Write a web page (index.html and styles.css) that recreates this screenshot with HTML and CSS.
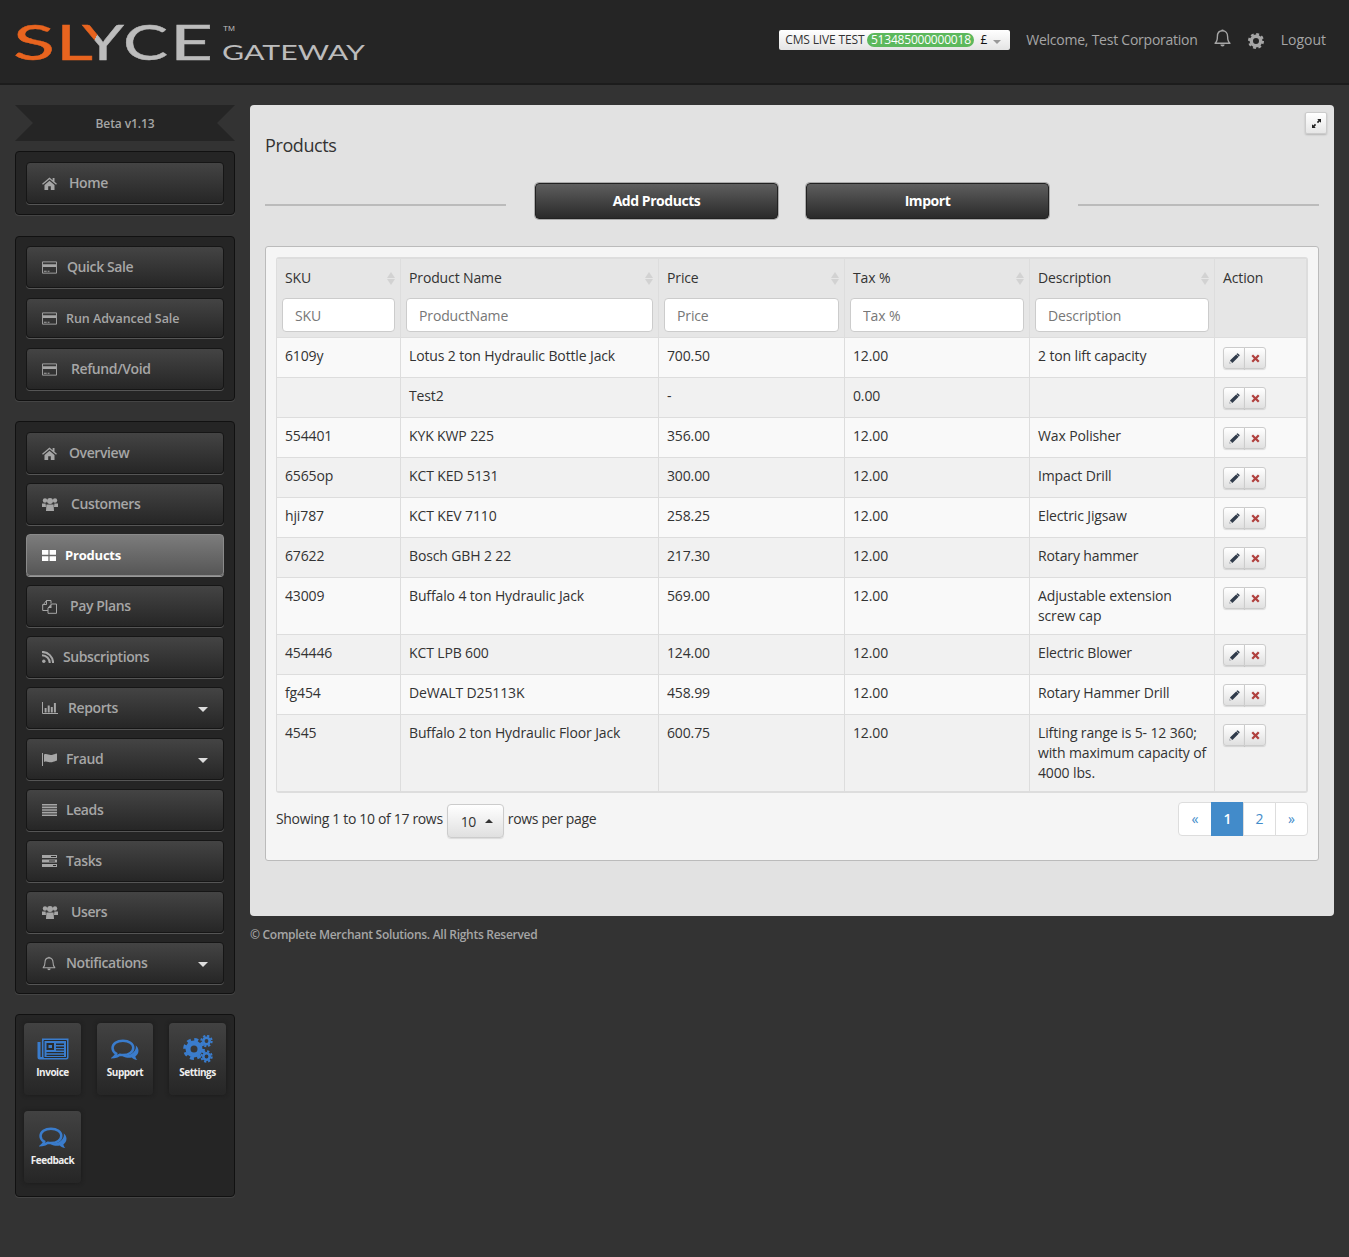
FILE: index.html
```html
<!DOCTYPE html>
<html lang="en">
<head>
    <meta charset="UTF-8">
    <meta name="viewport" content="width=device-width, initial-scale=1.0">
    <title>Slyce Gateway - Products</title>
    <link rel="stylesheet" href="styles.css">
</head>
<body>
    <svg class="sprite" xmlns="http://www.w3.org/2000/svg">
        <symbol id="i-home" viewBox="0 0 16 14"><path d="M8 0.5 0 7.4l0.9 1L8 2.4l7.1 6 0.9-1-2.6-2.2V1h-2v2.5zM2.6 8.6V14h4V10h2.8v4h4V8.6L8 4z" fill="currentColor"/></symbol>
        <symbol id="i-card" viewBox="0 0 16 13"><path d="M0.5 0.5h15v12h-15z" fill="none" stroke="currentColor"/><path d="M1 3h14v3H1zM2 10h3v1H2zM6 10h2v1H6z" fill="currentColor"/></symbol>
        <symbol id="i-users" viewBox="0 0 16 14"><circle cx="3" cy="3.5" r="2.2" fill="currentColor"/><circle cx="13" cy="3.5" r="2.2" fill="currentColor"/><circle cx="8" cy="4" r="3" fill="currentColor"/><path d="M0 6.5h3.6L4 10H0zM12.4 6.5H16V10h-4zM4.4 7.5h7.2L12 14H4z" fill="currentColor"/></symbol>
        <symbol id="i-grid" viewBox="0 0 14 11"><path d="M0 0h6.4v4.8H0zM7.6 0H14v4.8H7.6zM0 6.2h6.4V11H0zM7.6 6.2H14V11H7.6z" fill="currentColor"/></symbol>
        <symbol id="i-files" viewBox="0 0 15 15"><path d="M0.7 6.5 4.5 1.5H9v3M4.5 1.5v4H0.7v6H6M9.5 5h5v9.3H6V9z" fill="none" stroke="currentColor"/><path d="M6 9l3.5-4v4z" fill="currentColor"/></symbol>
        <symbol id="i-rss" viewBox="0 0 12 12"><circle cx="1.8" cy="10.2" r="1.7" fill="currentColor"/><path d="M0 4.2a7.8 7.8 0 0 1 7.8 7.8M0 0.9A11.1 11.1 0 0 1 11.1 12" fill="none" stroke="currentColor" stroke-width="2"/></symbol>
        <symbol id="i-chart" viewBox="0 0 16 12"><path d="M0.5 0v11.5H16" fill="none" stroke="currentColor"/><path d="M2.6 6h2v4.4h-2zM5.700 3.600h2v6.800h-2zM8.800 5h2v5.400h-2zM11.900 1h2v9.400h-2z" fill="currentColor"/></symbol>
        <symbol id="i-flag" viewBox="0 0 15 13"><path d="M0.5 0v13" fill="none" stroke="currentColor"/><path d="M2 1.500c3-1.400 5 1.200 8 0.400 1.600-0.400 3-1 5-1.400v7c-2 0.400-3.400 1.400-5 1.700-3 0.600-5-1.600-8-0.300z" fill="currentColor"/></symbol>
        <symbol id="i-list" viewBox="0 0 15 12"><path d="M0 0h15v1.600H0zM0 2.600h15v1.600H0zM0 5.200h15v1.600H0zM0 7.800h15v1.600H0zM0 10.400h15V12H0z" fill="currentColor"/></symbol>
        <symbol id="i-tasks" viewBox="0 0 15 12"><path d="M0 0h15v3H0zM0 4.500h15v3H0zM0 9h15v3H0z" fill="currentColor"/><path d="M9 1h5v1H9zM7 5.500h6v1H7zM11 10h3v1h-3z" fill="#2c2c2c"/></symbol>
        <symbol id="i-bell" viewBox="0 0 16 18"><path d="M1 14c2-1.600 2.200-3.600 2.200-6.400C3.200 4.500 5 2.200 8 2.200s4.800 2.300 4.800 5.400c0 2.800 0.200 4.800 2.200 6.400z" fill="none" stroke="currentColor" stroke-width="1.300" stroke-linejoin="round"/><path d="M6.700 2.200a1.300 1.300 0 0 1 2.600 0zM6 15h4a2 2 0 0 1-4 0z" fill="currentColor"/></symbol>
        <symbol id="i-gear" viewBox="0 0 16 16"><circle cx="8" cy="8" r="4.700" fill="none" stroke="currentColor" stroke-width="3.400"/><circle cx="8" cy="8" r="6.900" fill="none" stroke="currentColor" stroke-width="2.200" stroke-dasharray="2.900 2.520"/></symbol>
        <symbol id="i-comments" viewBox="0.500 0.500 27 21"><path d="M12 2C6.200 2 2 5 2 9c0 2.300 1.400 4.300 3.500 5.500-0.300 1.300-1 2.300-2 3.200 2.200-0.200 4-1 5.500-2.100 1 0.200 2 0.300 3 0.300 5.800 0 10-3 10-7S17.800 2 12 2z" fill="none" stroke="currentColor" stroke-width="2.400"/><path d="M24.300 6.500C26 8 27 9.700 27 11.800c0 2.200-1.200 4.100-3 5.400 0.300 1.300 1 2.600 1.800 3.500-2.100-0.200-4-1.200-5.300-2.400-3.500 0.700-7.500-0.200-9.700-2 6 0.500 12-1.800 13.500-6.600 0.300-1.100 0.300-2.200 0-3.200z" fill="currentColor"/></symbol>
        <symbol id="i-news" viewBox="0 0 32 22"><path d="M5 0.500h26.500v19a2 2 0 0 1-2 2H2.500A2 2 0 0 1 0.500 19.500V4H3.500v15h1.500z" fill="currentColor"/><path d="M7 2.500h22.500v17H7z" fill="none" stroke="#2b2b2b"/><path d="M9.500 5h7.500v7H9.500zM19 5.500h8v1.500h-8zM19 8.500h8V10h-8zM19 11.200h8v1.300h-8zM9.500 14h17.500v1.300H9.500zM9.500 16.800h17.500v1.300H9.500z" fill="#2b2b2b"/><path d="M11.500 7h3.500v3h-3.500z" fill="currentColor"/></symbol>
        <symbol id="i-cogs" viewBox="0 0 30 28"><g fill="none" stroke="currentColor"><circle cx="11" cy="14" r="6" stroke-width="5"/><circle cx="11" cy="14" r="9.400" stroke-width="3" stroke-dasharray="4 3.380"/><circle cx="23.500" cy="6" r="3.200" stroke-width="2.600"/><circle cx="23.500" cy="6" r="5.200" stroke-width="2" stroke-dasharray="2.200 1.880"/><circle cx="23.500" cy="21.500" r="3.200" stroke-width="2.600"/><circle cx="23.500" cy="21.500" r="5.200" stroke-width="2" stroke-dasharray="2.200 1.880"/></g></symbol>
        <symbol id="i-pencil" viewBox="0 0 12 12"><path d="M0.500 11.500 1.300 8 7.800 1.500l2.700 2.700L4 10.700zM8.600 0.700a1 1 0 0 1 1.400 0l1.300 1.300a1 1 0 0 1 0 1.400l-0.500 0.500-2.700-2.700z" fill="#2f3a4a"/><path d="M1.500 8.500 3.500 10.500 0.500 11.500z" fill="#ddd"/></symbol>
        <symbol id="i-times" viewBox="0 0 10 10"><path d="M0.500 2.300 2.300 0.500 5 3.200 7.700 0.500 9.500 2.300 6.800 5l2.700 2.700-1.800 1.800L5 6.800 2.300 9.500 0.500 7.700 3.200 5z" fill="#b0403e"/></symbol>
        <symbol id="i-expand" viewBox="0 0 10 10"><path d="M5.800 0H10v4.200L8.500 2.800 6.700 4.600 5.400 3.300 7.200 1.500zM4.200 10H0V5.800l1.500 1.400 1.800-1.800 1.300 1.300-1.800 1.800z" fill="#222"/></symbol>
    </svg>

    <header class="topbar">
        <svg class="logo" width="370" height="84" viewBox="0 0 370 84" xmlns="http://www.w3.org/2000/svg">
            <defs>
                <linearGradient id="yfill" x1="0" y1="0" x2="1" y2="0.7">
                    <stop offset="0.42" stop-color="#e8641f"/>
                    <stop offset="0.42" stop-color="#bcbcbc"/>
                </linearGradient>
            </defs>
            <g class="logo-big">
                <text x="13" y="60" textLength="42" lengthAdjust="spacingAndGlyphs" fill="#e8641f" stroke="#e8641f">S</text>
                <text x="56" y="60" textLength="37" lengthAdjust="spacingAndGlyphs" fill="#e8641f" stroke="#e8641f">L</text>
                <text x="82" y="60" textLength="42" lengthAdjust="spacingAndGlyphs" fill="url(#yfill)" stroke="url(#yfill)">Y</text>
                <text x="123" y="60" textLength="45" lengthAdjust="spacingAndGlyphs" fill="#bcbcbc" stroke="#bcbcbc">C</text>
                <text x="170" y="60" textLength="43" lengthAdjust="spacingAndGlyphs" fill="#bcbcbc" stroke="#bcbcbc">E</text>
            </g>
            <text class="logo-tm" x="223" y="31" textLength="12" lengthAdjust="spacingAndGlyphs">TM</text>
            <text class="logo-small" x="222" y="60" textLength="143" lengthAdjust="spacingAndGlyphs">GATEWAY</text>
        </svg>
        <div class="topbar-right">
            <div class="merchant-select">
                <span class="merchant-name">CMS LIVE TEST</span>
                <span class="merchant-id">513485000000018</span>
                <span class="merchant-cur">£</span>
                <span class="caret caret-grey"></span>
            </div>
            <a class="welcome">Welcome, Test Corporation</a>
            <svg class="top-bell"><use href="#i-bell"/></svg>
            <svg class="top-gear"><use href="#i-gear"/></svg>
            <a class="logout">Logout</a>
        </div>
    </header>

    <div class="layout">
        <aside class="sidebar">
            <div class="ribbon">Beta v1.13</div>

            <nav class="panel panel-home">
                <a class="nav-btn off-27"><span class="nav-icon"><svg width="15" height="13"><use href="#i-home"/></svg></span>Home</a>
            </nav>

            <nav class="panel panel-sales">
                <a class="nav-btn off-25"><span class="nav-icon"><svg width="15" height="13"><use href="#i-card"/></svg></span>Quick Sale</a>
                <a class="nav-btn nav-short off-24"><span class="nav-icon"><svg width="15" height="13"><use href="#i-card"/></svg></span>Run Advanced Sale</a>
                <a class="nav-btn off-29"><span class="nav-icon"><svg width="15" height="13"><use href="#i-card"/></svg></span>Refund/Void</a>
            </nav>

            <nav class="panel panel-main">
                <a class="nav-btn off-27"><span class="nav-icon"><svg width="15" height="13"><use href="#i-home"/></svg></span>Overview</a>
                <a class="nav-btn off-29"><span class="nav-icon"><svg width="16" height="14"><use href="#i-users"/></svg></span>Customers</a>
                <a class="nav-btn active off-23"><span class="nav-icon"><svg width="14" height="11"><use href="#i-grid"/></svg></span>Products</a>
                <a class="nav-btn off-28"><span class="nav-icon"><svg width="15" height="15"><use href="#i-files"/></svg></span>Pay Plans</a>
                <a class="nav-btn off-21"><span class="nav-icon"><svg width="12" height="12"><use href="#i-rss"/></svg></span>Subscriptions</a>
                <a class="nav-btn off-26"><span class="nav-icon"><svg width="16" height="12"><use href="#i-chart"/></svg></span>Reports<span class="caret"></span></a>
                <a class="nav-btn off-24"><span class="nav-icon"><svg width="15" height="13"><use href="#i-flag"/></svg></span>Fraud<span class="caret"></span></a>
                <a class="nav-btn off-24"><span class="nav-icon"><svg width="15" height="12"><use href="#i-list"/></svg></span>Leads</a>
                <a class="nav-btn off-24"><span class="nav-icon"><svg width="15" height="12"><use href="#i-tasks"/></svg></span>Tasks</a>
                <a class="nav-btn off-29"><span class="nav-icon"><svg width="16" height="14"><use href="#i-users"/></svg></span>Users</a>
                <a class="nav-btn off-24"><span class="nav-icon"><svg width="14" height="15"><use href="#i-bell"/></svg></span>Notifications<span class="caret"></span></a>
            </nav>

            <div class="panel panel-tiles">
                <a class="tile tile-news"><svg width="32" height="22"><use href="#i-news"/></svg>Invoice</a>
                <a class="tile"><svg width="28" height="22"><use href="#i-comments"/></svg>Support</a>
                <a class="tile tile-cogs"><svg width="30" height="28"><use href="#i-cogs"/></svg>Settings</a>
                <a class="tile"><svg width="28" height="22"><use href="#i-comments"/></svg>Feedback</a>
            </div>
        </aside>

        <div class="content">
            <main class="main-box">
                <button class="expand-btn"><svg width="9" height="9"><use href="#i-expand"/></svg></button>
                <h1>Products</h1>

                <div class="action-row">
                    <span class="rule"></span>
                    <button class="big-btn">Add Products</button>
                    <button class="big-btn">Import</button>
                    <span class="rule"></span>
                </div>

                <section class="well">
                    <div class="table-wrap">
                        <table class="products">
                            <colgroup>
                                <col class="c-sku"><col class="c-name"><col class="c-price"><col class="c-tax"><col class="c-desc"><col class="c-action">
                            </colgroup>
                            <thead>
                                <tr>
                                    <th><div class="th-label sortable">SKU</div><input placeholder="SKU"></th>
                                    <th><div class="th-label sortable">Product Name</div><input placeholder="ProductName"></th>
                                    <th><div class="th-label sortable">Price</div><input placeholder="Price"></th>
                                    <th><div class="th-label sortable">Tax %</div><input placeholder="Tax %"></th>
                                    <th><div class="th-label sortable">Description</div><input placeholder="Description"></th>
                                    <th><div class="th-label">Action</div></th>
                                </tr>
                            </thead>
                            <tbody>
                                <tr>
                                    <td>6109y</td><td>Lotus 2 ton Hydraulic Bottle Jack</td><td>700.50</td><td>12.00</td><td>2 ton lift capacity</td>
                                    <td><div class="row-btns"><button><svg width="11" height="11"><use href="#i-pencil"/></svg></button><button><svg width="9" height="9"><use href="#i-times"/></svg></button></div></td>
                                </tr>
                                <tr>
                                    <td></td><td>Test2</td><td>-</td><td>0.00</td><td></td>
                                    <td><div class="row-btns"><button><svg width="11" height="11"><use href="#i-pencil"/></svg></button><button><svg width="9" height="9"><use href="#i-times"/></svg></button></div></td>
                                </tr>
                                <tr>
                                    <td>554401</td><td>KYK KWP 225</td><td>356.00</td><td>12.00</td><td>Wax Polisher</td>
                                    <td><div class="row-btns"><button><svg width="11" height="11"><use href="#i-pencil"/></svg></button><button><svg width="9" height="9"><use href="#i-times"/></svg></button></div></td>
                                </tr>
                                <tr>
                                    <td>6565op</td><td>KCT KED 5131</td><td>300.00</td><td>12.00</td><td>Impact Drill</td>
                                    <td><div class="row-btns"><button><svg width="11" height="11"><use href="#i-pencil"/></svg></button><button><svg width="9" height="9"><use href="#i-times"/></svg></button></div></td>
                                </tr>
                                <tr>
                                    <td>hji787</td><td>KCT KEV 7110</td><td>258.25</td><td>12.00</td><td>Electric Jigsaw</td>
                                    <td><div class="row-btns"><button><svg width="11" height="11"><use href="#i-pencil"/></svg></button><button><svg width="9" height="9"><use href="#i-times"/></svg></button></div></td>
                                </tr>
                                <tr>
                                    <td>67622</td><td>Bosch GBH 2 22</td><td>217.30</td><td>12.00</td><td>Rotary hammer</td>
                                    <td><div class="row-btns"><button><svg width="11" height="11"><use href="#i-pencil"/></svg></button><button><svg width="9" height="9"><use href="#i-times"/></svg></button></div></td>
                                </tr>
                                <tr>
                                    <td>43009</td><td>Buffalo 4 ton Hydraulic Jack</td><td>569.00</td><td>12.00</td><td>Adjustable extension screw cap</td>
                                    <td><div class="row-btns"><button><svg width="11" height="11"><use href="#i-pencil"/></svg></button><button><svg width="9" height="9"><use href="#i-times"/></svg></button></div></td>
                                </tr>
                                <tr>
                                    <td>454446</td><td>KCT LPB 600</td><td>124.00</td><td>12.00</td><td>Electric Blower</td>
                                    <td><div class="row-btns"><button><svg width="11" height="11"><use href="#i-pencil"/></svg></button><button><svg width="9" height="9"><use href="#i-times"/></svg></button></div></td>
                                </tr>
                                <tr>
                                    <td>fg454</td><td>DeWALT D25113K</td><td>458.99</td><td>12.00</td><td>Rotary Hammer Drill</td>
                                    <td><div class="row-btns"><button><svg width="11" height="11"><use href="#i-pencil"/></svg></button><button><svg width="9" height="9"><use href="#i-times"/></svg></button></div></td>
                                </tr>
                                <tr>
                                    <td>4545</td><td>Buffalo 2 ton Hydraulic Floor Jack</td><td>600.75</td><td>12.00</td><td>Lifting range is 5- 12 360; with maximum capacity of 4000 lbs.</td>
                                    <td><div class="row-btns"><button><svg width="11" height="11"><use href="#i-pencil"/></svg></button><button><svg width="9" height="9"><use href="#i-times"/></svg></button></div></td>
                                </tr>
                            </tbody>
                        </table>
                    </div>

                    <div class="table-foot">
                        <div class="rows-info">
                            <span>Showing 1 to 10 of 17 rows</span>
                            <button class="page-size">10<span class="caret caret-up"></span></button>
                            <span>rows per page</span>
                        </div>
                        <div class="pager">
                            <a>«</a><a class="current">1</a><a>2</a><a>»</a>
                        </div>
                    </div>
                </section>
            </main>
            <footer class="copyright">© Complete Merchant Solutions. All Rights Reserved</footer>
        </div>
    </div>
</body>
</html>
```

FILE: styles.css
```css
* {
    box-sizing: border-box;
}
body {
    margin: 0;
    min-height: 1257px;
    background-color: #333;
    font-family: "Open Sans", sans-serif;
    font-size: 14px;
    line-height: 20px;
    color: #333;
}
.sprite {
    display: none;
}
a {
    text-decoration: none;
}

/* top bar */
.topbar {
    display: flex;
    justify-content: space-between;
    height: 85px;
    background-color: #252525;
    border-bottom: 2px solid #1c1c1c;
}
.logo {
    display: block;
}
.logo-big text {
    font-family: Lato, sans-serif;
    font-size: 49px;
    stroke-width: 0.4px;
}
.logo-tm {
    font-family: "Liberation Sans", sans-serif;
    font-size: 7px;
    fill: #bcbcbc;
}
.logo-small {
    font-family: Lato, sans-serif;
    font-size: 22px;
    fill: #bcbcbc;
}
.topbar-right {
    display: flex;
    align-items: flex-start;
    padding: 30px 23px 0 0;
    color: #a6a6a6;
}
.merchant-select {
    display: flex;
    align-items: center;
    width: 231px;
    height: 20px;
    padding-left: 6px;
    border-radius: 2px;
    background: linear-gradient(#fff, #e4e4e4);
    color: #333;
    font-size: 12px;
}
.merchant-name {
    letter-spacing: -0.15px;
    white-space: nowrap;
}
.merchant-id {
    margin-left: 3px;
    width: 107px;
    height: 14px;
    line-height: 14px;
    border-radius: 7px;
    background-color: #5cb85c;
    color: #fff;
    text-align: center;
    letter-spacing: -0.2px;
}
.merchant-cur {
    margin-left: 6px;
    color: #111;
}
.welcome {
    margin-left: 16px;
    color: #a6a6a6;
    letter-spacing: -0.24px;
    white-space: nowrap;
}
.top-bell {
    width: 17px;
    height: 20px;
    margin: -2px 0 0 16px;
    color: #a6a6a6;
}
.top-gear {
    width: 16px;
    height: 16px;
    margin: 3px 0 0 17px;
    color: #a6a6a6;
}
.logout {
    margin-left: 17px;
    color: #a6a6a6;
}

/* carets */
.caret {
    margin-left: auto;
    margin-top: 3px;
    width: 0;
    height: 0;
    border-left: 5px solid transparent;
    border-right: 5px solid transparent;
    border-top: 5px solid #ddd;
}
.caret-grey {
    margin: 3px 9px 0 auto;
    border-left-width: 4px;
    border-right-width: 4px;
    border-top: 4px solid #999;
}
.caret-up {
    margin: 0 0 0 9px;
    border-left-width: 4px;
    border-right-width: 4px;
    border-top: 0;
    border-bottom: 4px solid #333;
}

/* sidebar */
.layout {
    display: flex;
    align-items: flex-start;
    padding: 20px 15px 0;
    gap: 15px;
}
.sidebar {
    flex: none;
    width: 220px;
}
.ribbon {
    height: 36px;
    line-height: 37px;
    background-color: #252525;
    clip-path: polygon(0 0, 100% 0, calc(100% - 18px) 50%, 100% 100%, 0 100%, 18px 50%);
    color: #a6a6a6;
    font-size: 12px;
    font-weight: 600;
    letter-spacing: -0.1px;
    text-align: center;
}
.panel {
    display: flex;
    flex-direction: column;
    gap: 9px;
    margin-top: 20px;
    padding: 10px;
    background-color: #252525;
    border: 1px solid #111;
    border-radius: 4px;
    box-shadow: 0 1px 0 #444;
}
.panel-home {
    margin-top: 10px;
}
.panel-sales {
    gap: 10px;
    margin-top: 21px;
    padding-top: 9px;
}
.panel-main {
    padding-bottom: 9px;
}
.nav-btn {
    display: flex;
    align-items: center;
    height: 42px;
    padding: 0 15px;
    border-radius: 4px;
    border: 1px solid #161616;
    background: linear-gradient(#444, #262626);
    box-shadow: 0 1px 0 #555;
    color: #a6a6a6;
    font-weight: 600;
    letter-spacing: -0.4px;
    white-space: nowrap;
}
.nav-short {
    height: 40px;
    padding-top: 1px;
    font-size: 12.5px;
    letter-spacing: -0.05px;
}
.nav-btn .caret {
    margin-top: 3px;
}
.nav-btn.active {
    background: linear-gradient(#7c7c7c, #565656);
    border-color: #8a8a8a;
    box-shadow: 0 1px 0 #999;
    color: #fff;
    font-weight: 700;
    font-size: 13px;
    letter-spacing: -0.2px;
}
.nav-icon {
    display: flex;
    align-items: center;
    flex: none;
    width: 27px;
}
.off-21 .nav-icon { width: 21px; }
.off-23 .nav-icon { width: 23px; }
.off-24 .nav-icon { width: 24px; }
.off-25 .nav-icon { width: 25px; }
.off-26 .nav-icon { width: 26px; }
.off-28 .nav-icon { width: 28px; }
.off-29 .nav-icon { width: 29px; }

.panel-tiles {
    display: grid;
    grid-template-columns: 57px 56px 57px;
    grid-auto-rows: 72px;
    gap: 16px;
    height: 183px;
    padding: 8px;
}
.tile {
    display: flex;
    flex-direction: column;
    align-items: center;
    justify-content: flex-end;
    padding-bottom: 15px;
    border-radius: 4px;
    background: linear-gradient(#424242, #262626);
    box-shadow: 0 0 4px #1a1a1a;
    color: #eee;
    font-size: 10px;
    font-weight: 700;
    letter-spacing: -0.5px;
    line-height: 16px;
}
.tile svg {
    flex: none;
    margin-bottom: 3px;
    color: #3a7ccc;
}
.tile-news svg {
    margin-bottom: 4px;
}
.tile-cogs svg {
    margin-bottom: 1px;
}

/* main box */
.content {
    flex: 1;
    min-width: 0;
}
.main-box {
    position: relative;
    height: 811px;
    padding: 30px 15px 0;
    background-color: #e2e2e2;
    border-radius: 4px;
}
.main-box h1 {
    margin: 0;
    font-size: 18px;
    font-weight: 400;
    letter-spacing: -0.4px;
    line-height: 20px;
    color: #333;
}
.expand-btn {
    position: absolute;
    top: 7px;
    right: 7px;
    width: 22px;
    height: 22px;
    padding: 0;
    display: flex;
    align-items: center;
    justify-content: center;
    border: 1px solid #ccc;
    border-radius: 2px;
    background: linear-gradient(#fff, #e6e6e6);
    box-shadow: 0 1px 2px rgba(0, 0, 0, 0.2);
}
.action-row {
    display: flex;
    align-items: flex-start;
    gap: 28px;
    margin-top: 28px;
}
.rule {
    flex: 1;
    height: 2px;
    margin-top: 21px;
    background-color: #bbb;
}
.rule:first-child {
    margin-right: 1px;
}
.rule:last-child {
    margin-left: 1px;
}
.big-btn {
    width: 243px;
    height: 36px;
    padding-bottom: 2px;
    border: 1px solid #222;
    border-radius: 4px;
    background: linear-gradient(#5e5e5e, #2a2a2a);
    box-shadow: 0 0 0 1px #aaa;
    color: #fff;
    font-family: inherit;
    font-size: 14px;
    font-weight: 700;
    letter-spacing: -0.45px;
}

/* table */
.well {
    height: 615px;
    margin-top: 27px;
    padding: 10px;
    background-color: #f5f5f5;
    border: 1px solid #bbb;
    border-radius: 3px;
}
.table-wrap {
    border: 2px solid #ddd;
    border-left-width: 1px;
    border-radius: 3px;
    overflow: hidden;
}
.products {
    width: 1029px;
    table-layout: fixed;
    border-collapse: separate;
    border-spacing: 0;
    letter-spacing: -0.13px;
}
.c-sku { width: 124px; }
.c-name { width: 258px; }
.c-price { width: 186px; }
.c-tax { width: 185px; }
.c-desc { width: 185px; }
.c-action { width: 91px; }
.products th {
    padding: 9px 5px 5px;
    background-color: #e6e6e6;
    border-right: 1px solid #ddd;
    border-bottom: 1px solid #ddd;
    font-weight: 400;
    text-align: left;
    vertical-align: top;
}
.th-label {
    position: relative;
    height: 20px;
    margin-bottom: 10px;
    padding-left: 3px;
}
.sortable::before,
.sortable::after {
    content: "";
    position: absolute;
    right: 0;
    width: 0;
    height: 0;
    border-left: 4px solid transparent;
    border-right: 4px solid transparent;
}
.sortable::before {
    top: 4px;
    border-bottom: 6px solid #d2d2d2;
}
.sortable::after {
    top: 11px;
    border-top: 6px solid #d2d2d2;
}
.products input {
    display: block;
    width: 100%;
    height: 34px;
    padding: 0 12px;
    border: 1px solid #ccc;
    border-radius: 4px;
    background-color: #fff;
    font-family: inherit;
    font-size: 14px;
    letter-spacing: -0.13px;
}
.products input::placeholder {
    color: #777;
}
.products th:last-child,
.products td:last-child {
    border-right: 0;
}
.products td {
    padding: 8px;
    border-right: 1px solid #ddd;
    border-bottom: 1px solid #ddd;
    vertical-align: top;
}
.products td:nth-child(5) {
    padding-right: 4px;
}
.products tbody tr:nth-child(odd) td {
    background-color: #f9f9f9;
}
.products tbody tr:nth-child(even) td {
    background-color: #f1f1f1;
}
.products tbody tr:last-child td {
    border-bottom: 0;
}
.row-btns {
    display: flex;
    margin-top: 1px;
}
.row-btns button {
    display: flex;
    align-items: center;
    justify-content: center;
    width: 22px;
    height: 22px;
    padding: 0;
    border: 1px solid #ccc;
    background: linear-gradient(#fff, #e0e0e0);
    box-shadow: 0 1px 1px rgba(0, 0, 0, 0.12);
}
.row-btns button:first-child {
    border-radius: 3px 0 0 3px;
}
.row-btns button:last-child {
    margin-left: -1px;
    border-radius: 0 3px 3px 0;
}
.table-foot {
    display: flex;
    justify-content: space-between;
    align-items: flex-start;
    padding-top: 9px;
}
.rows-info {
    display: flex;
    align-items: flex-start;
    margin-top: 2px;
}
.rows-info span {
    margin-top: 5px;
    letter-spacing: -0.33px;
}
.page-size {
    display: flex;
    align-items: center;
    width: 57px;
    height: 34px;
    margin: 0 4px;
    padding: 0 0 0 13px;
    border: 1px solid #ccc;
    border-radius: 4px;
    background: linear-gradient(#fff, #e0e0e0);
    box-shadow: 0 1px 1px rgba(0, 0, 0, 0.1);
    color: #333;
    font-family: inherit;
    font-size: 14px;
    letter-spacing: -0.5px;
}
.rows-info .caret-up {
    margin-top: 0;
}
.pager {
    display: flex;
    height: 34px;
}
.pager a {
    width: 33px;
    line-height: 32px;
    margin-left: -1px;
    border: 1px solid #ddd;
    background-color: #fff;
    color: #428bca;
    text-align: center;
}
.pager a:first-child {
    width: 34px;
    margin-left: 0;
    border-radius: 4px 0 0 4px;
}
.pager a:last-child {
    border-radius: 0 4px 4px 0;
}
.pager a.current {
    background-color: #428bca;
    border-color: #428bca;
    color: #fff;
    font-weight: 600;
}
.copyright {
    margin-top: 9px;
    color: #a6a6a6;
    font-size: 12px;
    font-weight: 600;
    letter-spacing: -0.28px;
}
```
